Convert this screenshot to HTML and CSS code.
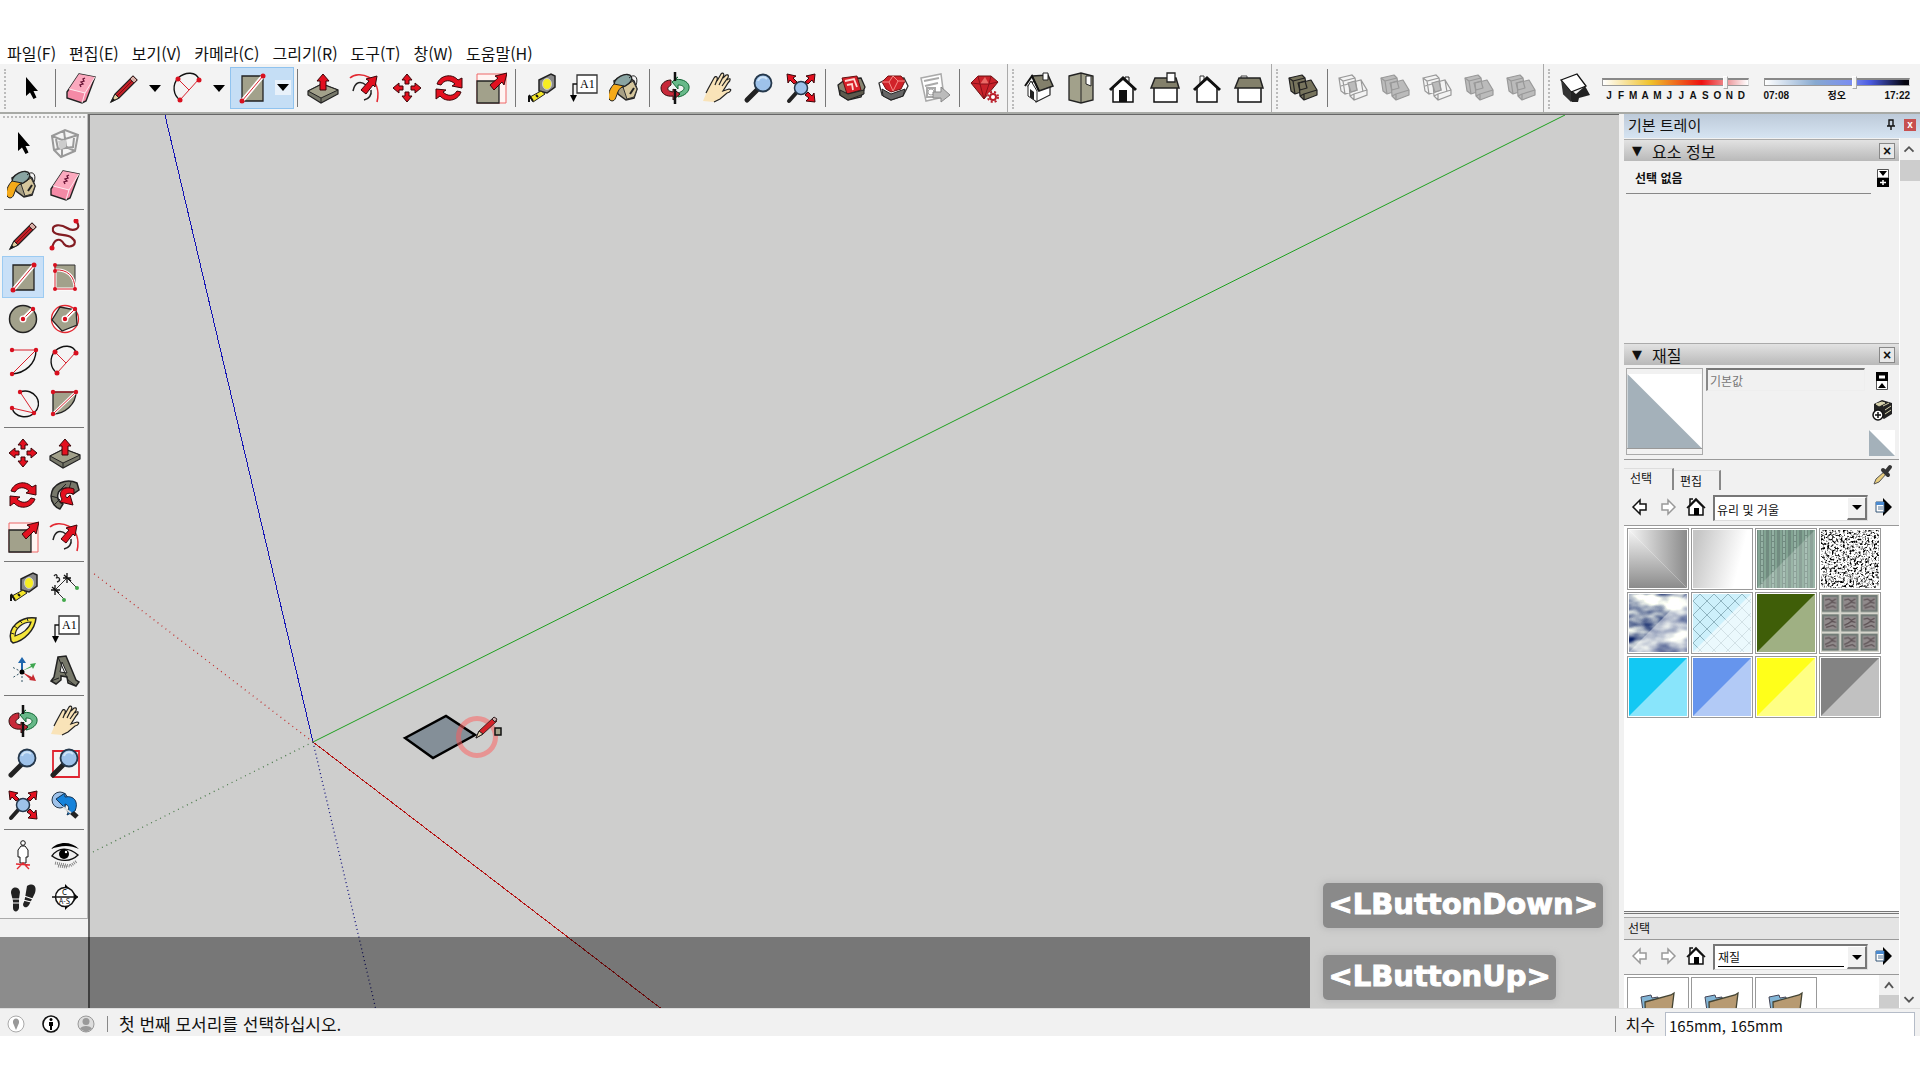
FILE: index.html
```html
<!DOCTYPE html>
<html lang="ko">
<head>
<meta charset="utf-8">
<title>SketchUp</title>
<link rel="stylesheet" href="styles.css">
</head>
<body>
<svg class="defs" aria-hidden="true">
<defs>
<symbol id="arrow" viewBox="0 0 32 32"><path d="M11 5V24L15 20.500L18.500 27L21.500 25.500L18.500 19H23Z"/></symbol>
<symbol id="eraser" viewBox="0 0 32 32"><path d="M14 2L30 5L21 29L17 31L2 26V20Z" fill="#f48aa6" stroke="#222" stroke-width="1.400"/><path d="M14 2L30 5L20 21L4 17Z" fill="#fba9be"/><path d="M20 21L17 31M4 17L20 21L30 5" fill="none" stroke="#fff" stroke-width=".8"/><path d="M20 6l-2 1 1 2-3 1 2 2-3 1 1 2" stroke="#613" fill="none" stroke-width="1.300"/></symbol>
<symbol id="pencil" viewBox="0 0 32 32"><path d="M3 30L7 22L25 4L29 8L11 26Z" fill="#c51f26" stroke="#222" stroke-width="1.200"/><path d="M3 30L7 22L11 26Z" fill="#e4cfa0" stroke="#222"/><path d="M3 30l2-4 2 2z" fill="#111"/><path d="M9 24L27 6" stroke="#7d0b10"/><path d="M25 4l4 4-3 3-4-4z" fill="#d8b0a8" stroke="#422"/></symbol>
<symbol id="arc2" viewBox="0 0 32 32"><path d="M6 6C14-1 24 0 27 7M6 6C0 13 1 23 8 28" fill="none" stroke="#111" stroke-width="1.400"/><path d="M6 7L17 18M8 28L27 7" class="ln"/><g class="dot"><circle cx="6" cy="7" r="2.500"/><circle cx="27" cy="8" r="2.500"/><circle cx="8" cy="28" r="2.500"/></g></symbol>
<symbol id="rect" viewBox="0 0 32 32"><path d="M6 4H27V29H6Z" fill="#a2a18b" stroke="#222" stroke-width="1.300"/><path d="M6 29L27 4" stroke="#fff" stroke-width="4"/><path d="M6 29L27 4" class="ln"/><g class="dot"><circle cx="6" cy="29" r="2.500"/><circle cx="27" cy="4" r="2.500"/></g></symbol>
<symbol id="push" viewBox="0 0 32 32"><path d="M1 19L15 12L31 18V22L14 31L1 23Z" fill="#77786a" stroke="#222" stroke-width="1.200"/><path d="M1 19L15 12L31 18L14 26Z" fill="#a2a18b" stroke="#222"/><path d="M14 26V31" stroke="#222"/><path d="M13 18V9H10L16 2L22 9H19V18Z" class="red"/></symbol>
<symbol id="offset" viewBox="0 0 32 32"><path d="M1 6C9-2 34 4 28 30" fill="none" stroke="#e32831" stroke-width="1.600"/><path d="M4 19C6 9 12 9 17 13M22 18C23 23 20 27 15 28" fill="none" stroke="#222" stroke-width="1.500"/><path d="M12 18L20 9L17 7L28 4L26 15L24 13L17 22Z" class="red"/></symbol>
<symbol id="move" viewBox="0 0 32 32"><path d="M16 2L21 8H18V12H14V8H11ZM16 30L21 24H18V20H14V24H11ZM2 16L8 11V14H12V18H8V21ZM30 16L24 11V14H20V18H24V21Z" class="red"/></symbol>
<symbol id="rotate" viewBox="0 0 32 32"><path d="M4 12C7 3 19 1 25 8L29 6V16L19 14L22 12C17 7 11 8 8 13Z" class="red"/><path d="M28 20C25 29 13 31 7 24L3 27V17L13 18L10 20C15 25 21 24 24 19Z" class="red"/></symbol>
<symbol id="scale" viewBox="0 0 32 32"><path d="M2 2H31V31H2Z" fill="#fff4f2" stroke="#e66"/><path d="M2 9H24V31H2Z" fill="#a2a18b" stroke="#222" stroke-width="1.300"/><path d="M15 13L23 6L20 4L32 1L29 13L27 10L19 18Z" class="red"/></symbol>
<symbol id="tape" viewBox="0 0 32 32"><path d="M14 8L26 2L30 4V15L22 21L14 19Z" fill="#888" stroke="#222" stroke-width="1.500"/><ellipse cx="22" cy="12" rx="4.500" ry="5.500" fill="#f7ee22" stroke="#ccc"/><path d="M16 19L5 25L8 30L20 22Z" fill="#f3e528" stroke="#222"/><path d="M4 23L8 29M4 24v6M11 23l2 2" stroke="#111" stroke-width="2"/></symbol>
<symbol id="text" viewBox="0 0 32 32"><path d="M10 3H30V21H10Z" fill="#fff" stroke="#333" stroke-width="1.300"/><path d="M10 12H6V25" fill="none" stroke="#111" stroke-width="1.300"/><path d="M3 23H10L6.500 30Z"/><text x="13" y="16" font-size="12" font-family="Liberation Serif, serif">A1</text></symbol>
<symbol id="paint" viewBox="0 0 32 32"><path d="M5 9L16 3L25 9L28 17L25 26L17 28L9 22Z" fill="#a79f84" stroke="#222" stroke-width="1.500"/><path d="M14 15L24 9L28 17L25 25L18 27Z" fill="#d5c69c" stroke="#333"/><ellipse cx="14" cy="9" rx="9.500" ry="5.500" transform="rotate(-27 14 9)" fill="#89a4a2" stroke="#222" stroke-width="1.300"/><path d="M5 12C-1 18-3 28 3 29C9 29 6 17 15 14Z" fill="#f5aa19" stroke="#222"/><path d="M20 6C25 1 30 5 27 13" fill="none" stroke="#222"/><path d="M21 22l4-6" stroke="#222" stroke-width="2"/></symbol>
<symbol id="orbit" viewBox="0 0 32 32"><path d="M15 8C21 6 29 9 30 14C31 20 25 24 19 25V21C28 18 26 13 19 13V17L13 10L19 5Z" fill="#67b989" stroke="#163" /><path d="M12 8C6 8 2 12 2 16C2 22 8 25 14 24V28L21 22L14 17V20C8 19 7 16 12 13Z" fill="#c72939" stroke="#311"/><path d="M16 0V9M16 17V32" stroke="#111" stroke-width="2.500"/></symbol>
<symbol id="hand" viewBox="0 0 32 32"><path d="M2 29L7 17L13 6C15 3 17 5 16 8L20 2C22 0 24 2 22 5L25 3C28 2 28 5 26 7L28 6C30 7 29 9 27 11L22 19L28 17C31 17 30 20 26 21L19 27L13 30Z" fill="#f9e3b8"/><path d="M5 21L7 17L13 6C15 3 17 5 16 8L14 13M16 9L20 2C22 0 24 2 22 5L18 13M22 6L25 3C28 2 28 5 26 7L21 14M26 8C30 5 30 8 27 11L22 19L28 17C31 17 30 20 26 21L19 27L13 30" fill="none" stroke="#222" stroke-width="1.200"/></symbol>
<symbol id="zoom" viewBox="0 0 32 32"><path d="M4 28L14 18" stroke="#222" stroke-width="5" stroke-linecap="round"/><circle cx="20" cy="11" r="8.500" fill="#9ec2ea" stroke="#25384c" stroke-width="1.800"/><path d="M15 9C16 5 21 4 24 7" stroke="#cfe4f8" stroke-width="2" fill="none"/></symbol>
<symbol id="extents" viewBox="0 0 32 32"><path d="M4 29L12 20" stroke="#222" stroke-width="4" stroke-linecap="round"/><circle cx="16" cy="16" r="6.500" fill="#9ec2ea" stroke="#25384c" stroke-width="1.500"/><path d="M2 2L11 4L8 6L12 10L9 12L5 8L3 11ZM30 2L29 11L27 8L23 12L20 10L24 6L21 4ZM30 30L21 29L24 26L20 23L23 20L27 24L29 21Z" class="red"/></symbol>
<symbol id="box1" viewBox="0 0 32 32"><path d="M3 13L11 7L26 6L30 15L26 25L13 28L5 23Z" fill="#888572" stroke="#222" stroke-width="1.300"/><path d="M7 6L22 4L26 18L12 22Z" fill="#d92029" stroke="#611"/><path d="M10 9L19 7L22 15M12 13L17 12L18 18" stroke="#ffd9d3" stroke-width="1.800" fill="none"/><path d="M5 18L13 22L29 18V22L13 28L5 23Z" fill="#5c594c" stroke="#222"/></symbol>
<symbol id="box2" viewBox="0 0 32 32"><path d="M2 11L10 7L27 6L31 14L26 24L14 28L5 23Z" fill="#fff" stroke="#333" stroke-width="1.300"/><path d="M5 10L11 4H24L28 9L24 17L14 20L9 17Z" fill="#d12229" stroke="#711"/><path d="M5 10L12 10L16 19L21 9L28 9M12 10L16 4L21 9" stroke="#f58b86" fill="none"/><path d="M5 17L14 22L28 17L26 24L14 28L6 24Z" fill="#666" stroke="#222"/></symbol>
<symbol id="layout" viewBox="0 0 32 32"><path d="M2 6L22 2L25 25L7 29Z" fill="#fff" stroke="#aaa" stroke-width="1.500"/><path d="M5 9L20 6M6 14l13-3M8 16h8v9H8z" stroke="#aaa" stroke-width="2" fill="none"/><circle cx="12" cy="20" r="3" fill="none" stroke="#aaa"/><path d="M14 20H22V15L31 23L22 30V26H14Z" fill="#bbb" stroke="#888"/></symbol>
<symbol id="gem" viewBox="0 0 32 32"><path d="M2 11L9 4H22L29 10L15 27Z" fill="#c9222a" stroke="#611"/><path d="M11 12L16 5L20 12Z" fill="#ea6a66"/><path d="M2 11L11 12L15 27L20 12L29 10M4 9L9 4L11 12H20L22 4" fill="none" stroke="#8a0f18"/><circle cx="24" cy="25" r="6" fill="#f3f3f3"/><circle cx="24" cy="25" r="3" fill="#fff" stroke="#b91e2a" stroke-width="2"/><circle cx="24" cy="25" r="5" fill="none" stroke="#b91e2a" stroke-width="2" stroke-dasharray="2 2"/></symbol>
<symbol id="iso" viewBox="0 0 32 32"><path d="M5 14L13 30L27 23V10L15 6Z" fill="#fff" stroke="#222" stroke-width="1.200"/><path d="M5 14V24L14 30V19L8 9Z" fill="#fff" stroke="#222"/><path d="M9 4L25 3L30 14L16 19Z" fill="#83806b" stroke="#222" stroke-width="1.500"/><path d="M2 14L9 4L16 19" fill="none" stroke="#111" stroke-width="2"/><path d="M7 17l4 3v8l-4-3z" fill="#222"/><path d="M20 1h5v7h-5z" fill="#fff" stroke="#222"/></symbol>
<symbol id="top" viewBox="0 0 32 32"><path d="M4 4L16 1L28 4V28L16 31L4 28Z" fill="#a2a18b" stroke="#222" stroke-width="1.300"/><path d="M16 1V31" stroke="#222"/><path d="M21 4H26V14L21 12Z" fill="#fff" stroke="#222"/></symbol>
<symbol id="front" viewBox="0 0 32 32"><path d="M6 15L16 7L26 15V30H6Z" fill="#fff" stroke="#111" stroke-width="1.500"/><path d="M3 18L16 6L29 18" fill="none" stroke="#111" stroke-width="3"/><path d="M12 18H20V30H12Z" fill="#111"/><path d="M18 8V5h4v5" stroke="#111" fill="none"/></symbol>
<symbol id="right" viewBox="0 0 32 32"><path d="M5 15H28V30H5Z" fill="#fff" stroke="#111" stroke-width="1.500"/><path d="M6 6H27L30 16H2Z" fill="#83806b" stroke="#222" stroke-width="1.500"/><path d="M18 1H26V10H18Z" fill="#fff" stroke="#222" stroke-width="1.300"/></symbol>
<symbol id="back" viewBox="0 0 32 32"><path d="M9 13V4h4v6" fill="#fff" stroke="#333"/><path d="M6 15L16 7L26 15V30H6Z" fill="#fff" stroke="#111" stroke-width="1.500"/><path d="M3 18L16 6L29 18" fill="none" stroke="#111" stroke-width="3"/></symbol>
<symbol id="left" viewBox="0 0 32 32"><path d="M5 15H28V30H5Z" fill="#fff" stroke="#111" stroke-width="1.500"/><path d="M8 6V4h6v2" fill="none" stroke="#444"/><path d="M6 6H27L30 16H2Z" fill="#83806b" stroke="#222" stroke-width="1.500"/></symbol>
<symbol id="solid" viewBox="0 0 32 32"><g stroke="currentColor" stroke-width="1.200" stroke-linejoin="round"><path d="M2 6L15 3L18 6L20 18L8 22L4 19Z" fill="var(--solid)"/><path d="M2 6L6 9L18 6M6 9L8 22" fill="none"/><path d="M12 11L24 8L30 18V23L17 28L13 24Z" fill="var(--solid)"/><path d="M13 24L17 22L30 18M17 22V28M11 11L18 9L20 16L13 18Z" fill="none"/></g></symbol>
<symbol id="wire" viewBox="0 0 32 32"><g stroke="currentColor" stroke-width="1.200" fill="none"><path d="M2 6L15 3L18 6L20 18L8 22L4 19ZM2 6L6 9L18 6M6 9L8 22M4 14L18 10M12 11L24 8L30 18V23L17 28L13 24ZM13 24L17 22L30 18M17 22V28M24 8L26 20"/><path d="M11 11L18 9L20 18L14 20Z" fill="var(--solid)"/></g></symbol>
<symbol id="shadow" viewBox="0 0 32 32"><path d="M5 12L17 22L26 14L31 23L20 26L19 30H13L4 22Z" fill="#222"/><path d="M2 8L18 2L27 14L12 20Z" fill="#fff" stroke="#111" stroke-width="1.300"/><path d="M2 8L12 20V30L4 22Z" fill="#333"/></symbol>
<symbol id="component" viewBox="0 0 32 32"><g fill="none" stroke="#999" stroke-width="2"><path d="M3 9L16 3L29 8L26 24L12 30L5 23ZM3 9L13 13L29 8M13 13V30M7 12L9 22L24 20L25 11M15 4L17 20L5 23M17 20L26 24"/></g><path d="M9 14l8-1v7l-6 3z" fill="#ccc"/></symbol>
<symbol id="free" viewBox="0 0 32 32"><path d="M3 29C5 20 11 18 15 25C20 31 31 25 23 19C18 14 7 18 4 12C2 5 12 5 18 9C24 13 34 10 27 2" fill="none" stroke="#821c22" stroke-width="2.200"/><g class="dot"><circle cx="3" cy="29" r="2.500"/><circle cx="27" cy="2" r="2.500"/></g></symbol>
<symbol id="rrect" viewBox="0 0 32 32"><path d="M6 4H26V28H6Z" fill="#a2a18b" stroke="#333"/><path d="M6 9C18 8 26 15 26 28H6Z" fill="#a2a18b" stroke="#fff" stroke-width="3"/><path d="M6 3V28H26C26 15 18 8 6 9" class="ln" fill="none"/><g class="dot"><circle cx="6" cy="4" r="2"/><circle cx="6" cy="10" r="2"/><circle cx="6" cy="28" r="2"/><circle cx="26" cy="28" r="2"/></g></symbol>
<symbol id="circle" viewBox="0 0 32 32"><circle cx="16" cy="16" r="13.500" fill="#a2a18b" stroke="#222" stroke-width="1.500"/><path d="M16 16L26 6" stroke="#fff" stroke-width="4"/><path d="M16 16L26 6" class="ln"/><circle cx="16" cy="16" r="3.500" fill="#fff"/><g class="dot"><circle cx="16" cy="16" r="2.200"/><circle cx="26" cy="6" r="2.200"/></g></symbol>
<symbol id="polygon" viewBox="0 0 32 32"><circle cx="16" cy="16" r="13.500" fill="#fff" stroke="#e32831" stroke-width="1.300"/><path d="M11 4L27 7L28 22L13 28L3 17Z" fill="#a2a18b" stroke="#222" stroke-width="1.300"/><path d="M16 16L26 6" stroke="#fff" stroke-width="4"/><path d="M16 16L26 6" class="ln"/><circle cx="16" cy="16" r="3.500" fill="#fff"/><g class="dot"><circle cx="16" cy="16" r="2.200"/><circle cx="26" cy="6" r="2.200"/></g></symbol>
<symbol id="arc1" viewBox="0 0 32 32"><path d="M29 5C29 19 18 28 5 29" fill="none" stroke="#111" stroke-width="1.400"/><path d="M5 5H29L5 29" class="ln" fill="none"/><g class="dot"><circle cx="5" cy="5" r="2.200"/><circle cx="29" cy="5" r="2.200"/><circle cx="5" cy="29" r="2.200"/></g></symbol>
<symbol id="arc3" viewBox="0 0 32 32"><path d="M13 5C27 0 38 16 27 26C21 32 8 31 5 21" fill="none" stroke="#111" stroke-width="1.400"/><path d="M13 5L27 26L5 21" class="ln" fill="none"/><g class="dot"><circle cx="13" cy="5" r="2.200"/><circle cx="27" cy="26" r="2.200"/><circle cx="5" cy="21" r="2.200"/></g></symbol>
<symbol id="pie" viewBox="0 0 32 32"><path d="M4 5H27C27 17 16 27 4 27Z" fill="#a2a18b" stroke="#222" stroke-width="1.300"/><path d="M4 27L27 5" stroke="#fff" stroke-width="3"/><path d="M4 5H27L4 27" class="ln" fill="none"/><g class="dot"><circle cx="4" cy="5" r="2.200"/><circle cx="27" cy="5" r="2.200"/><circle cx="4" cy="27" r="2.200"/></g></symbol>
<symbol id="follow" viewBox="0 0 32 32"><path d="M28 4C18-1 3 4 2 17C2 24 7 29 11 30L14 25C6 21 7 10 17 9L24 15L30 11Z" fill="#77786a" stroke="#222" stroke-width="1.500"/><path d="M9 13L17 5M2 17L9 19M5 26L11 20M22 3L20 10" stroke="#222"/><path d="M25 10C15 6 8 13 13 20L11 23L24 26L21 16L18 19C15 16 17 13 25 15Z" class="red"/></symbol>
<symbol id="dimension" viewBox="0 0 32 32"><path d="M6 19L18 7M6 19L15 28M18 7L28 17" stroke="#333"/><path d="M2 19H11M6 14V24M3 16l7 6M14 7H22M18 2V12M15 4l7 6" stroke="#111" stroke-width="1.300"/><circle cx="15" cy="29" r="2" fill="#43a84b"/><circle cx="28" cy="17" r="2" fill="#43a84b"/><path d="M5 5C8 1 9 7 7 7C11 5 12 10 8 11" fill="none" stroke="#222" stroke-width="1.300"/></symbol>
<symbol id="protractor" viewBox="0 0 32 32"><path d="M4 28C0 14 14 3 29 5C28 17 17 28 6 30Z" fill="#f4e53a" stroke="#222" stroke-width="1.500"/><path d="M8 23C8 15 16 9 24 9C22 16 15 21 8 23Z" fill="#f3f3f3" stroke="#222" stroke-width="1.200"/><path d="M4 20l3 1M7 13l3 2M13 8l2 2M20 5l1 3" stroke="#222"/></symbol>
<symbol id="axes" viewBox="0 0 32 32"><path d="M15 17L5 12M15 17L5 23M15 17V29" stroke-dasharray="2 2" stroke="#356" /><path d="M14 17V8H11L15 2L19 8H16V17Z" fill="#1e66ad"/><path d="M15 16L24 11L23 9L29 8L26 14L25 12Z" fill="#3fa650"/><path d="M15 17L25 22L26 19L29 26L22 25L23 24Z" fill="#c72a30"/><circle cx="15" cy="17" r="2.500"/></symbol>
<symbol id="text3d" viewBox="0 0 32 32"><path d="M9 2L17 1L27 25L30 27L27 31L19 28L18 22L12 21L12 25L7 29L2 26L5 22Z" fill="#77786a" stroke="#222" stroke-width="1.500"/><path d="M13 7L18 18L11 17Z" fill="#eee" stroke="#222"/><path d="M9 2L19 25L27 31M2 26L10 23" stroke="#222" fill="none"/></symbol>
<symbol id="zoomwin" viewBox="0 0 32 32"><path d="M4 4H30V30H4Z" fill="none" stroke="#df2430" stroke-width="1.800"/><use href="#zoom" width="32" height="32"/></symbol>
<symbol id="previous" viewBox="0 0 32 32"><circle cx="11" cy="11" r="8" fill="#9ec2ea" stroke="#25384c"/><path d="M19 20L28 28" stroke="#222" stroke-width="5"/><path d="M7 10L16 4V8C25 6 30 13 26 22L18 26C21 20 20 16 16 15V19Z" fill="#1683db" stroke="#135"/><path d="M14 18L22 24" stroke="#ddd" stroke-width="2"/></symbol>
<symbol id="camera" viewBox="0 0 32 32"><circle cx="16" cy="4" r="2.300" fill="#fff" stroke="#111"/><path d="M14 7L11 11V18H13V24H19V18H21V11L18 7Z" fill="#fff" stroke="#111"/><path d="M10 30L16 24L22 30M9 25L23 26" stroke="#e32831" fill="none" stroke-width="1.400"/></symbol>
<symbol id="look" viewBox="0 0 32 32"><path d="M2 10C8 3 21 1 30 10C20 5 10 7 2 10Z"/><path d="M3 17C9 8 20 8 29 16C22 23 11 23 3 17Z" fill="#eee" stroke="#111" stroke-width="1.400"/><circle cx="15" cy="15" r="5"/><circle cx="17" cy="13" r="1.200" fill="#fff"/><path d="M6 24L21 27L28 22M9 27l9 1" stroke="#888" stroke-width="3" stroke-dasharray="1 1" fill="none"/></symbol>
<symbol id="walk" viewBox="0 0 32 32"><path d="M4 12C4 5 12 5 13 11L12 18L12 27C11 32 6 31 6 27L6 20ZM20 5C27 1 30 6 28 12L25 18L22 24C19 29 14 25 17 21L18 17Z" fill="#222"/><path d="M5 18H13M6 22H12M17 15L26 18M16 19L24 21" stroke="#fff" stroke-width="1.200"/></symbol>
<symbol id="section" viewBox="0 0 32 32"><path d="M16 3L29 16L16 29Z"/><circle cx="16" cy="16" r="9.500" fill="#fff" stroke="#111" stroke-width="1.500"/><path d="M3 16H29" stroke="#111" stroke-width="1.500"/><text x="13" y="14" font-size="8">C</text><text x="10" y="23" font-size="7">A-S</text></symbol>
<symbol id="back-nav" viewBox="0 0 20 20"><path d="M3 10L10 3V7H16V13H10V17Z" fill="#fff" stroke="currentColor" stroke-width="1.500"/></symbol>
<symbol id="fwd-nav" viewBox="0 0 20 20"><path d="M17 10L10 3V7H4V13H10V17Z" fill="#fff" stroke="currentColor" stroke-width="1.500"/></symbol>
<symbol id="home" viewBox="0 0 20 20"><path d="M4 8V2H7" fill="none" stroke="#111" stroke-width="1.500"/><path d="M3 10V18H17V10L10 3Z" fill="#fff" stroke="#111" stroke-width="1.500"/><path d="M1 11L10 2L19 11" fill="none" stroke="#111" stroke-width="1.600"/><path d="M8 11H13V18H8Z"/></symbol>
<symbol id="menu-nav" viewBox="0 0 20 20"><path d="M9 1L18 10L9 19V14H4V5H9Z"/><path d="M2 5H10V15H2Z" fill="#fff" stroke="#357"/><path d="M2 5H10V8H2Z" fill="#4a8ad0"/><path d="M4 10H9M4 12H9" stroke="#579"/></symbol>
<symbol id="folder" viewBox="0 0 60 60"><path d="M13 19L23 17L24 20L30 19L32 50L18 54Z" fill="#82b5d6" stroke="#445"/><path d="M17 24L43 17L46 15L42 48L18 54Z" fill="#b79a72" stroke="#443" stroke-width="1.300"/></symbol>
<linearGradient id="m1" x1="0" y1="0" x2="1" y2="0"><stop offset="0" stop-color="#f5f5f5"/><stop offset="1" stop-color="#8b8b8b"/></linearGradient>
<linearGradient id="m1b" x1="0" y1="0" x2="0" y2="1"><stop offset="0" stop-color="#f5f5f5"/><stop offset="1" stop-color="#8b8b8b"/></linearGradient>
<linearGradient id="m2" x1="0" y1=".4" x2=".8" y2=".6"><stop offset="0" stop-color="#c6c6c6"/><stop offset="1" stop-color="#fff"/></linearGradient>
<pattern id="ribs" width="11" height="58" patternUnits="userSpaceOnUse"><path d="M0 0H11V58H0Z" fill="#718b80"/><path d="M2 0V58M8 0V58" stroke="#83a493" stroke-width="2"/><path d="M5 0V58" stroke="#b7d8c8" stroke-dasharray="5 1"/></pattern>
<pattern id="lattice" width="14" height="14" patternUnits="userSpaceOnUse"><path d="M0 0H14V14H0Z" fill="#cdf0fb"/><path d="M0 7L7 0L14 7L7 14Z" fill="none" stroke="#8fb4c0"/></pattern>
<pattern id="blocks" width="19.330" height="19.330" patternUnits="userSpaceOnUse"><path d="M0 0H20V20H0Z" fill="#d5d5cc"/><path d="M1 1H18V18H1Z" fill="#707a75"/><path d="M3 3H16V16H3Z" fill="#918b8c"/><path d="M4 6L8 5L11 7L15 5M4 12L8 10L11 8L15 9M5 14L9 13L12 12L15 14" stroke="#5c5154" fill="none" stroke-width="1.300"/></pattern>
<filter id="speckle" x="0" y="0" width="1" height="1" color-interpolation-filters="sRGB"><feTurbulence type="fractalNoise" baseFrequency=".45" numOctaves="2" seed="4"/><feColorMatrix values="4 0 0 0 -1.150 4 0 0 0 -1.150 4 0 0 0 -1.150 0 0 0 0 1"/></filter>
<filter id="sky" x="0" y="0" width="1" height="1" color-interpolation-filters="sRGB"><feTurbulence type="fractalNoise" baseFrequency=".035 .06" numOctaves="3" seed="8"/><feColorMatrix values="2.400 0 0 0 -.65 2.200 0 0 0 -.5 1.400 0 0 0 0 0 0 0 0 1"/></filter>
</defs>
</svg>

<nav class="menubar">
<a href="#">파일(F)</a><a href="#">편집(E)</a><a href="#">보기(V)</a><a href="#">카메라(C)</a><a href="#">그리기(R)</a><a href="#">도구(T)</a><a href="#">창(W)</a><a href="#">도움말(H)</a>
</nav>

<header class="toolbar">
<div class="group">
<button class="tool" aria-label="선택"><svg><use href="#arrow"/></svg></button>
<i class="sep"></i>
<button class="tool" aria-label="지우개"><svg><use href="#eraser"/></svg></button>
<div class="split"><button class="tool" aria-label="선"><svg><use href="#pencil"/></svg></button><button class="drop" aria-label="선 메뉴"></button></div>
<div class="split"><button class="tool" aria-label="호"><svg><use href="#arc2"/></svg></button><button class="drop" aria-label="호 메뉴"></button></div>
<div class="split active"><button class="tool" aria-label="직사각형"><svg><use href="#rect"/></svg></button><button class="drop" aria-label="도형 메뉴"></button></div>
<i class="sep"></i>
<button class="tool" aria-label="밀기/끌기"><svg><use href="#push"/></svg></button>
<button class="tool" aria-label="오프셋"><svg><use href="#offset"/></svg></button>
<button class="tool" aria-label="이동"><svg><use href="#move"/></svg></button>
<button class="tool" aria-label="회전"><svg><use href="#rotate"/></svg></button>
<button class="tool" aria-label="배율"><svg><use href="#scale"/></svg></button>
<i class="sep"></i>
<button class="tool" aria-label="줄자"><svg><use href="#tape"/></svg></button>
<button class="tool" aria-label="텍스트"><svg><use href="#text"/></svg></button>
<button class="tool" aria-label="페인트통"><svg><use href="#paint"/></svg></button>
<i class="sep"></i>
<button class="tool" aria-label="궤도"><svg><use href="#orbit"/></svg></button>
<button class="tool" aria-label="이동 보기"><svg><use href="#hand"/></svg></button>
<button class="tool" aria-label="확대/축소"><svg><use href="#zoom"/></svg></button>
<button class="tool" aria-label="범위 확대"><svg><use href="#extents"/></svg></button>
<i class="sep"></i>
<button class="tool" aria-label="3D Warehouse"><svg><use href="#box1"/></svg></button>
<button class="tool" aria-label="Extension Warehouse"><svg><use href="#box2"/></svg></button>
<button class="tool" aria-label="LayOut"><svg><use href="#layout"/></svg></button>
<i class="sep"></i>
<button class="tool" aria-label="확장 관리자"><svg><use href="#gem"/></svg></button>
</div>
<div class="group">
<button class="tool" aria-label="등각"><svg><use href="#iso"/></svg></button>
<button class="tool" aria-label="위"><svg><use href="#top"/></svg></button>
<button class="tool" aria-label="앞"><svg><use href="#front"/></svg></button>
<button class="tool" aria-label="오른쪽"><svg><use href="#right"/></svg></button>
<button class="tool" aria-label="뒤"><svg><use href="#back"/></svg></button>
<button class="tool" aria-label="왼쪽"><svg><use href="#left"/></svg></button>
</div>
<div class="group">
<button class="tool shell" aria-label="외부 셸"><svg><use href="#solid"/></svg></button>
<i class="sep"></i>
<button class="tool muted" aria-label="교차"><svg><use href="#wire"/></svg></button>
<button class="tool muted" aria-label="결합"><svg><use href="#solid"/></svg></button>
<button class="tool muted" aria-label="빼기"><svg><use href="#wire"/></svg></button>
<button class="tool muted" aria-label="트림"><svg><use href="#solid"/></svg></button>
<button class="tool muted" aria-label="분할"><svg><use href="#solid"/></svg></button>
</div>
<div class="group grow">
<button class="tool" aria-label="그림자"><svg><use href="#shadow"/></svg></button>
<div class="slider"><input class="months" type="range" min="0" max="100" value="86" aria-label="날짜"><div class="scale month-names"><span>J</span><span>F</span><span>M</span><span>A</span><span>M</span><span>J</span><span>J</span><span>A</span><span>S</span><span>O</span><span>N</span><span>D</span></div></div>
<div class="slider"><input class="hours" type="range" min="0" max="100" value="63" aria-label="시간"><div class="scale"><span>07:08</span><span>정오</span><span>17:22</span></div></div>
</div>
</header>

<main class="workspace">
<aside class="palette">
<div class="tools">
<button class="tool" aria-label="선택"><svg><use href="#arrow"/></svg></button><button class="tool" aria-label="구성 요소"><svg><use href="#component"/></svg></button>
<button class="tool" aria-label="페인트통"><svg><use href="#paint"/></svg></button><button class="tool" aria-label="지우개"><svg><use href="#eraser"/></svg></button>
<i class="rule"></i>
<button class="tool" aria-label="선"><svg><use href="#pencil"/></svg></button><button class="tool" aria-label="자유형"><svg><use href="#free"/></svg></button>
<button class="tool active" aria-label="직사각형"><svg><use href="#rect"/></svg></button><button class="tool" aria-label="회전된 직사각형"><svg><use href="#rrect"/></svg></button>
<button class="tool" aria-label="원"><svg><use href="#circle"/></svg></button><button class="tool" aria-label="다각형"><svg><use href="#polygon"/></svg></button>
<button class="tool" aria-label="호"><svg><use href="#arc1"/></svg></button><button class="tool" aria-label="2점 호"><svg><use href="#arc2"/></svg></button>
<button class="tool" aria-label="3점 호"><svg><use href="#arc3"/></svg></button><button class="tool" aria-label="파이"><svg><use href="#pie"/></svg></button>
<i class="rule"></i>
<button class="tool" aria-label="이동"><svg><use href="#move"/></svg></button><button class="tool" aria-label="밀기/끌기"><svg><use href="#push"/></svg></button>
<button class="tool" aria-label="회전"><svg><use href="#rotate"/></svg></button><button class="tool" aria-label="따라가기"><svg><use href="#follow"/></svg></button>
<button class="tool" aria-label="배율"><svg><use href="#scale"/></svg></button><button class="tool" aria-label="오프셋"><svg><use href="#offset"/></svg></button>
<i class="rule"></i>
<button class="tool" aria-label="줄자"><svg><use href="#tape"/></svg></button><button class="tool" aria-label="치수"><svg><use href="#dimension"/></svg></button>
<button class="tool" aria-label="각도기"><svg><use href="#protractor"/></svg></button><button class="tool" aria-label="텍스트"><svg><use href="#text"/></svg></button>
<button class="tool" aria-label="축"><svg><use href="#axes"/></svg></button><button class="tool" aria-label="3D 텍스트"><svg><use href="#text3d"/></svg></button>
<i class="rule"></i>
<button class="tool" aria-label="궤도"><svg><use href="#orbit"/></svg></button><button class="tool" aria-label="이동 보기"><svg><use href="#hand"/></svg></button>
<button class="tool" aria-label="확대/축소"><svg><use href="#zoom"/></svg></button><button class="tool" aria-label="창 확대"><svg><use href="#zoomwin"/></svg></button>
<button class="tool" aria-label="범위 확대"><svg><use href="#extents"/></svg></button><button class="tool" aria-label="이전"><svg><use href="#previous"/></svg></button>
<i class="rule"></i>
<button class="tool" aria-label="카메라 배치"><svg><use href="#camera"/></svg></button><button class="tool" aria-label="둘러보기"><svg><use href="#look"/></svg></button>
<button class="tool" aria-label="걷기"><svg><use href="#walk"/></svg></button><button class="tool" aria-label="단면"><svg><use href="#section"/></svg></button>
</div>
</aside>

<section class="viewport">
<svg class="scene">
<g stroke-width="1" fill="none">
<path d="M75 0L223 627" stroke="#1414b4" shape-rendering="crispEdges"/>
<path d="M223 627L1475 0" stroke="#1fa01f"/>
<path d="M223 627L573 895" stroke="#b41414" shape-rendering="crispEdges"/>
<path d="M223 627L3 458" stroke="#c03030" stroke-width="1.300" stroke-dasharray="1 4"/>
<path d="M223 627L286 895" stroke="#14147d" stroke-width="1.300" stroke-dasharray="1 3"/>
<path d="M223 627L3 737" stroke="#4a7a4a" stroke-width="1.300" stroke-dasharray="1 4"/>
</g>
<path d="M315 623L356 601L385 620L343 643Z" fill="#848f98" stroke="#000" stroke-width="2.500"/>
<circle cx="387" cy="622" r="18.500" fill="none" stroke="#ff5a5a" stroke-opacity=".5" stroke-width="5"/>
<path d="M386 623L389 616L403 603L407 606L393 619Z" fill="#d3232a" stroke="#422"/><path d="M386 623L389 616L393 619Z" fill="#e4d2b0" stroke="#222"/><path d="M402 604l2-2 3 2-2 3z" fill="#caa" stroke="#322"/>
<path d="M405 613H411V620H405Z" fill="#a2a18b" stroke="#111" stroke-width="1.500"/>
</svg>
</section>

<aside class="tray">
<div class="tray-title"><span>기본 트레이</span><button class="pin" aria-label="고정"><svg viewBox="0 0 10 12"><path d="M3 1H7V7H3ZM1 7H9M5 7V11M7 1V7" fill="none" stroke="#111" stroke-width="1.400"/></svg></button><button class="close" aria-label="닫기">x</button></div>
<div class="tray-body">
<div class="panels">
<h2><span class="tri">▼</span>요소 정보<button class="x" aria-label="요소 정보 닫기">×</button></h2>
<div class="entity"><div class="entity-row"><span>선택 없음</span><svg class="expand" viewBox="0 0 12 18"><path d="M.5.500H11.500V9H.5Z" fill="#fff" stroke="#555"/><path d="M2 2H10L6 7ZM0 9H12V18H0Z"/><path d="M3 13.500H9M6 11V16" stroke="#fff" stroke-width="1.500"/></svg></div></div>
<h2><span class="tri">▼</span>재질<button class="x" aria-label="재질 닫기">×</button></h2>
<div class="material">
<div class="preview"><svg viewBox="0 0 75 75"><path d="M0 0H75V75H0Z" fill="#fff"/><path d="M0 0L75 75H0Z" fill="#a4b1ba"/></svg></div>
<input class="name" type="text" value="기본값" disabled aria-label="재질 이름">
<div class="side">
<svg class="expand" viewBox="0 0 12 18"><path d="M.5 9V17.500H11.500V9" fill="#fff" stroke="#555"/><path d="M0 0H12V9H0ZM2 16H10L6 11Z"/><path d="M3 3.500H9V6.500H3Z" fill="#fff"/></svg>
<svg class="create" viewBox="0 0 22 22"><path d="M3 5L11 1L21 4V15L13 20L3 14Z" fill="#222"/><path d="M5 5L11 3L14 4L8 7ZM12 7L18 4M14 11L20 7M14 15L20 11" fill="#d9d4ae" stroke="#d9d4ae"/><circle cx="7" cy="16" r="5" fill="#fff" stroke="#111" stroke-width="1.500"/><path d="M4 16H10M7 13V19" stroke="#111" stroke-width="1.500"/></svg>
<svg class="mini" viewBox="0 0 26 26"><path d="M0 0H26V26H0Z" fill="#fff"/><path d="M0 0L26 26H0Z" fill="#a4b1ba"/></svg>
</div>
</div>
<div class="tabs"><button class="tab current">선택</button><button class="tab">편집</button><svg class="dropper" viewBox="0 0 22 22"><path d="M2 20L4 15L13 7L15 9L7 18Z" fill="#e8cd7d" stroke="#555"/><path d="M11 6L16 11M14 8L18 3" stroke="#333" stroke-width="4" stroke-linecap="round"/></svg></div>
<div class="nav"><button aria-label="뒤로"><svg><use href="#back-nav"/></svg></button><button class="dim" aria-label="앞으로"><svg><use href="#fwd-nav"/></svg></button><button aria-label="모델에서"><svg><use href="#home"/></svg></button><div class="combo"><select aria-label="재질 모음"><option>유리 및 거울</option></select><span class="tick"></span></div><button aria-label="세부 정보"><svg><use href="#menu-nav"/></svg></button></div>
<div class="swatches">
<svg viewBox="0 0 58 58"><path d="M0 0H58V58Z" fill="url(#m1)"/><path d="M0 0L58 58H0Z" fill="url(#m1b)"/></svg>
<svg viewBox="0 0 58 58"><path d="M0 0H58V58H0Z" fill="url(#m2)"/></svg>
<svg viewBox="0 0 58 58"><path d="M0 0H58V58H0Z" fill="url(#ribs)"/><path fill="#fff" d="M58 0V58H0Z" fill-opacity=".2"/></svg>
<svg viewBox="0 0 58 58"><path d="M0 0H58V58H0Z" filter="url(#speckle)"/></svg>
<svg viewBox="0 0 58 58"><path d="M0 0H58V58H0Z" filter="url(#sky)"/><path fill="#fff" d="M58 0V58H0Z" fill-opacity=".4"/></svg>
<svg viewBox="0 0 58 58"><path d="M0 0H58V58H0Z" fill="url(#lattice)"/><path fill="#fff" d="M58 0V58H0Z" fill-opacity=".6"/></svg>
<svg viewBox="0 0 58 58"><path d="M0 0H58V58H0Z" fill="#3f5e08"/><path d="M58 0V58H0Z" fill="#9fb083"/></svg>
<svg viewBox="0 0 58 58"><path d="M0 0H58V58H0Z" fill="url(#blocks)"/></svg>
<svg viewBox="0 0 58 58"><path d="M0 0H58V58H0Z" fill="#13c8f3"/><path d="M58 0V58H0Z" fill="#89e5fb"/></svg>
<svg viewBox="0 0 58 58"><path d="M0 0H58V58H0Z" fill="#6695ed"/><path d="M58 0V58H0Z" fill="#b2caf6"/></svg>
<svg viewBox="0 0 58 58"><path d="M0 0H58V58H0Z" fill="#ffff1a"/><path d="M58 0V58H0Z" fill="#ffff84"/></svg>
<svg viewBox="0 0 58 58"><path d="M0 0H58V58H0Z" fill="#838383"/><path d="M58 0V58H0Z" fill="#c1c1c1"/></svg>
</div>
<div class="divider"></div>
<div class="subtitle">선택</div>
<div class="nav lower"><button class="dim" aria-label="뒤로"><svg><use href="#back-nav"/></svg></button><button class="dim" aria-label="앞으로"><svg><use href="#fwd-nav"/></svg></button><button aria-label="모델에서"><svg><use href="#home"/></svg></button><div class="combo lined"><select aria-label="재질 폴더"><option>재질</option></select><span class="tick"></span></div><button aria-label="세부 정보"><svg><use href="#menu-nav"/></svg></button></div>
<div class="folders"><div class="folder"><svg><use href="#folder"/></svg></div><div class="folder"><svg><use href="#folder"/></svg></div><div class="folder"><svg><use href="#folder"/></svg></div><div class="mini-scroll"><svg viewBox="0 0 20 20"><path d="M6 13L10 8L14 13" class="chev"/></svg><i></i></div></div>
</div>
<div class="scroll"><svg viewBox="0 0 20 20"><path d="M5 13L10 8L15 13" class="chev"/></svg><i></i><svg class="down" viewBox="0 0 20 20"><path d="M5 8L10 13L15 8" class="chev"/></svg></div>
</div>
</aside>
<div class="shade"></div>
<div class="keys"><kbd>&lt;LButtonDown&gt;</kbd><kbd>&lt;LButtonUp&gt;</kbd></div>
</main>

<footer class="status">
<svg class="badge" viewBox="0 0 18 18"><circle cx="9" cy="9" r="8" fill="#fff" stroke="#aaa"/><path d="M9 15L6 8C5 2 13 2 12 8Z" fill="#999"/></svg>
<svg class="badge" viewBox="0 0 18 18"><circle cx="9" cy="9" r="8" fill="#fff" stroke="#111" stroke-width="1.600"/><circle cx="9" cy="4.500" r="1.500"/><path d="M7 7H11V11H10V15H8V11H7Z"/></svg>
<svg class="badge" viewBox="0 0 18 18"><circle cx="9" cy="9" r="8" fill="#ddd" stroke="#999"/><circle cx="9" cy="6.500" r="3.500" fill="#999"/><path d="M3 14C4 10 14 10 15 14L9 17Z" fill="#999"/></svg>
<span class="hint">첫 번째 모서리를 선택하십시오.</span>
<label class="dims" for="vcb">치수</label><input id="vcb" type="text" value="165mm, 165mm">
</footer>
</body>
</html>
```
FILE: styles.css
```css
* { box-sizing: border-box; }
body {
  margin: 0;
  padding: 40px 0 44px;
  min-height: 100vh;
  display: flex;
  flex-direction: column;
  background: #fff;
  color: #111;
  font-family: "Noto Sans CJK KR", sans-serif;
  font-size: 12px;
  overflow-x: hidden;
}
button {
  border: 0;
  padding: 0;
  background: none;
  color: inherit;
  font: inherit;
}
.defs { position: absolute; width: 0; height: 0; }
.red { fill: #e3101f; stroke: #3a0508; stroke-width: 1; }
.ln { stroke: #d8202c; stroke-width: 1; }
.dot { fill: #d8101f; }
.chev { fill: none; stroke: #555; stroke-width: 2; }

.menubar { display: flex; gap: 13px; height: 24px; padding: 2px 0 0 7px; align-items: center; }
.menubar a { color: #111; text-decoration: none; font-size: 16px; line-height: 22px; }

.toolbar {
  display: flex;
  height: 50px;
  background: #f3f3f3;
  border-bottom: 2px solid #a8aaa6;
}
.group {
  position: relative;
  display: flex;
  align-items: center;
  padding-left: 10px;
  padding-right: 1px;
  border-right: 1px solid #aaa;
}
.group::before {
  content: "";
  position: absolute;
  left: 4px;
  top: 5px;
  bottom: 3px;
  border-left: 2px dotted #bbb;
}
.group.grow { flex: 1; border-right: 0; padding-right: 10px; }
.tool { width: 42px; height: 40px; display: grid; place-items: center; flex: none; }
.tool svg { width: 32px; height: 32px; }
.sep { width: 8px; height: 38px; background: linear-gradient(#777, #777) 3px 0 / 1px 100% no-repeat; }
.split { display: flex; border: 1px solid transparent; height: 42px; }
.split.active { background: #c5def5; border-color: #90c3ef; }
.drop { width: 20px; display: grid; place-items: center; }
.drop::before { content: ""; border: 6px solid transparent; border-top: 7px solid #000; border-bottom: 0; }
.active .drop { width: 16px; height: 15px; margin: 12px 2px; background: #e8f1fa; }
.shell { --solid: #77745d; color: #222; }
.muted { --solid: #bbb; color: #999; }
.slider { flex: 1; margin-left: 6px; display: flex; flex-direction: column; }
.slider + .slider { margin-left: 15px; }
.slider input {
  appearance: none;
  width: 100%;
  height: 8px;
  margin: 4px 0 0;
  border: 1px solid #999;
  border-top: 2px solid #888;
  border-right-color: #ddd;
}
.slider input::-webkit-slider-thumb {
  appearance: none;
  width: 5px;
  height: 13px;
  background: #f5f5f5;
  border: 1px solid #aaa;
  border-top-color: #fff;
  border-left-color: #fff;
}
.months { background: linear-gradient(90deg, #fff, #efc12a 33%, #e11 68%, #eda0a4 87%, #fff); }
.hours { background: linear-gradient(90deg, #fff, #87a9d0 35%, #7a8df0 60%, #4a5ae0 73%, #05050f 97%); }
.scale {
  display: flex;
  justify-content: space-between;
  font: bold 10px/14px "Liberation Sans", "Noto Sans CJK KR", sans-serif;
  margin-top: 3px;
}
.month-names { padding: 0 3px; }
.month-names span { width: 8px; text-align: center; }

.workspace { position: relative; flex: 1; display: flex; }
.palette { width: 88px; background: #f1f1f1; flex: none; }
.tools {
  position: relative;
  display: grid;
  grid-template-columns: 42px 42px;
  padding: 8px 0 0 2px;
  background: #f4f4f4;
  border-right: 1px solid #bbb;
  border-bottom: 1px solid #aaa;
}
.tools::before { content: ""; position: absolute; left: 3px; right: 2px; top: 2px; border-top: 2px dotted #bbb; }
.tools .tool { height: 42px; }
.tools .active { background: #c9e0f7; outline: 1px solid #9ccbf2; outline-offset: -1px; }
.rule { grid-column: 1 / -1; height: 8px; margin: 0 2px; background: linear-gradient(#777, #777) 0 3px / 100% 1px no-repeat; }
.viewport {
  flex: 1;
  min-width: 0;
  position: relative;
  background: #cececd;
  border-left: 2px solid #6c6c6c;
  border-top: 1px solid #666;
}
.scene { position: absolute; inset: 0; width: 100%; height: 100%; }
.shade { position: absolute; left: 0; right: 610px; bottom: 0; height: 71px; background: rgba(0, 0, 0, .42); }
.keys {
  position: absolute;
  right: 317px;
  bottom: 8px;
  display: flex;
  flex-direction: column;
  align-items: flex-start;
  gap: 27px;
}
kbd {
  padding: 0 5px;
  height: 45px;
  border-radius: 5px;
  background: #8a8a8a;
  box-shadow: 0 0 6px 2px #bdbdbd;
  color: #fff;
  font: bold 29px/43px "DejaVu Sans", sans-serif;
  -webkit-text-stroke: 1px #fff;
}

.tray { width: 301px; flex: none; background: #f1f1f1; padding-left: 5px; display: flex; flex-direction: column; font-size: 12px; }
.tray-title { height: 24px; display: flex; align-items: center; padding: 0 4px; background: linear-gradient(#bdcad9, #d6e4f2); font-size: 15px; line-height: 20px; padding-bottom: 2px; flex: none; }
.pin { margin-left: auto; width: 10px; height: 12px; display: grid; }
.close { margin-left: 8px; width: 12px; height: 12px; background: #c7504f; color: #fff; font: bold 10px/10px "Liberation Sans", sans-serif; }
.tray-body { flex: 1; display: flex; min-height: 0; }
.panels { flex: 1; display: flex; flex-direction: column; min-width: 0; }
h2 {
  margin: 1px 0 0;
  height: 22px;
  flex: none;
  display: flex;
  align-items: center;
  padding: 0 4px 0 8px;
  font-size: 16px;
  font-weight: 400;
  line-height: 22px;
  background: linear-gradient(#e2e2e2, #b9b9b9);
  border-top: 1px solid #aaa;
}
.tri { font: 13px/22px "DejaVu Sans", sans-serif; width: 20px; }
.x { margin-left: auto; width: 16px; height: 16px; border: 1px solid #888; background: #e8e8e8; font: bold 14px/12px "Liberation Sans", sans-serif; }
.entity { height: 181px; padding: 0 4px 0 2px; flex: none; }
.entity-row { display: flex; justify-content: space-between; align-items: center; height: 33px; padding: 0 6px 0 9px; font-weight: 700; background: linear-gradient(#888, #888) 0 100% / 245px 1px no-repeat; }
.expand { width: 12px; height: 18px; }
.material { display: flex; align-items: flex-start; padding: 3px 4px 3px 2px; height: 95px; border-bottom: 1px solid #999; flex: none; }
.preview { width: 77px; height: 87px; border: 1px solid #aaa; padding-top: 5px; }
.preview svg { display: block; width: 75px; height: 75px; border-bottom: 1px solid #999; }
.name { flex: 1; min-width: 0; height: 23px; margin: 0 4px 0 3px; padding: 0 2px; border: 1px solid #eee; border-top: 2px solid #777; border-left: 2px solid #888; background: #f1f1f1; color: #777; font: 12px "Noto Sans CJK KR", sans-serif; }
.side { width: 26px; display: flex; flex-direction: column; align-items: center; padding-top: 4px; gap: 9px; }
.create { width: 22px; height: 22px; }
.mini { width: 26px; height: 26px; }
.tabs { display: flex; align-items: flex-end; height: 30px; padding-right: 5px; flex: none; }
.tab { height: 20px; width: 47px; padding: 0 6px; text-align: left; border-top: 1px solid #ddd; border-right: 2px solid #888; }
.tab.current { height: 22px; width: 50px; padding-bottom: 4px; }
.dropper { width: 22px; height: 22px; margin: 0 0 4px auto; }
.nav { display: flex; align-items: center; height: 36px; padding: 0 4px 0 5px; border-bottom: 1px solid #999; flex: none; }
.nav button { width: 22px; height: 22px; margin-right: 6px; }
.nav button:last-child { margin: 0 0 0 5px; }
.nav svg { width: 20px; height: 20px; }
.dim { color: #999; }
.combo { flex: 1; height: 26px; display: flex; background: #fff; border: 1px solid #ddd; border-top: 2px solid #777; border-left: 2px solid #777; }
.combo select { appearance: none; flex: 1; min-width: 0; border: 0; padding: 2px 2px 0; background: none; font: 12px "Noto Sans CJK KR", sans-serif; color: #111; }
.combo.lined select { border-bottom: 1px solid #000; margin: 0 3px 2px 3px; padding: 0; }
.tick { width: 20px; display: grid; place-items: center; background: #f1f1f1; border: 1px solid #fff; border-right: 2px solid #777; border-bottom: 2px solid #777; }
.tick::before { content: ""; border: 5px solid transparent; border-top-color: #000; border-bottom: 0; }
.swatches { flex: 1; background: #fff; display: grid; grid-template-columns: repeat(4, 62px); grid-auto-rows: 62px; gap: 2px; align-content: start; padding: 2px 3px; }
.swatches svg { width: 62px; height: 62px; border: 1px solid #999; padding: 1px; }
.divider { height: 7px; border-top: 3px double #777; border-bottom: 1px solid #aaa; flex: none; }
.subtitle { height: 21px; line-height: 20px; padding-left: 4px; background: #e4e4e4; flex: none; }
.lower { border-top: 1px solid #999; }
.folders { height: 33px; display: flex; gap: 2px; padding: 2px 0 0 3px; background: #fff; overflow: hidden; flex: none; }
.folder { width: 62px; border: 1px solid #999; border-bottom: 0; overflow: hidden; }
.folder svg { width: 60px; height: 60px; }
.mini-scroll { width: 20px; margin: -2px 0 0 auto; background: #f1f1f1; display: flex; flex-direction: column; }
.mini-scroll svg { width: 20px; height: 20px; flex: none; }
.mini-scroll i { flex: 1; background: #cdcdcd; }
.scroll { width: 21px; border-left: 1px solid #fff; display: flex; flex-direction: column; }
.scroll svg { width: 18px; height: 22px; }
.scroll i { height: 21px; background: #cdcdcd; }
.scroll .down { margin-top: auto; height: 18px; }

.status { display: flex; align-items: center; height: 28px; padding: 2px 5px 0 7px; background: #f1f1f1; border-top: 1px solid #ddd; font-size: 17px; }
.badge { width: 18px; height: 18px; margin-right: 17px; }
.hint { border-left: 1px solid #888; margin-left: -5px; padding-left: 11px; line-height: 16px; }
.dims { margin-left: auto; border-left: 1px solid #888; padding: 0 10px 0 10px; line-height: 16px; font-size: 16px; }
.status input { width: 250px; height: 24px; align-self: flex-end; border: 1px solid #b5bcc8; border-bottom: 0; padding: 2px 3px 0; font: 15px "Noto Sans CJK KR", sans-serif; color: #111; }
```
